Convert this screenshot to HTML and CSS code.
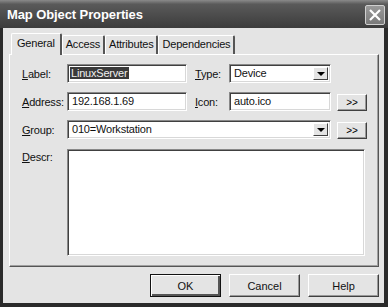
FILE: index.html
```html
<!DOCTYPE html>
<html>

<head>
    <link rel="stylesheet" href="styles.css">
</head>

<body>

    <div class="window">
        <div class="titlebar">
            <span class="title">Map Object Properties</span>
            <div class="close-btn">
                <svg width="14" height="12" viewBox="0 0 14 12">
                    <path d="M2 1 L12 11 M12 1 L2 11" stroke="white" stroke-width="2.2" fill="none" />
                </svg>
            </div>
        </div>

        <div class="client">
            <div class="tabs">
                <div class="tab active">General</div>
                <div class="tab">Access</div>
                <div class="tab">Attributes</div>
                <div class="tab">Dependencies</div>
            </div>

            <div class="panel">
                <div class="form">
                    <label class="lbl"><u>L</u>abel:</label>
                    <div class="field short"><span class="selected">LinuxServer</span></div>
                    <label class="lbl"><u>T</u>ype:</label>
                    <div class="field combo mid">
                        <span>Device</span>
                        <span class="drop-btn"></span>
                    </div>
                    <div></div>

                    <label class="lbl"><u>A</u>ddress:</label>
                    <div class="field short">192.168.1.69</div>
                    <label class="lbl"><u>I</u>con:</label>
                    <div class="field mid">auto.ico</div>
                    <button class="more-btn">&gt;&gt;</button>

                    <label class="lbl"><u>G</u>roup:</label>
                    <div class="field combo wide">
                        <span>010=Workstation</span>
                        <span class="drop-btn"></span>
                    </div>
                    <button class="more-btn">&gt;&gt;</button>

                    <label class="lbl descr-lbl"><u>D</u>escr:</label>
                    <div class="field descr"></div>
                </div>
            </div>

            <div class="buttons">
                <button class="dlg-btn default">OK</button>
                <button class="dlg-btn">Cancel</button>
                <button class="dlg-btn">Help</button>
            </div>
        </div>
    </div>

</body>

</html>
```

FILE: styles.css
```css
body {
    margin: 0;
    font-family: "Liberation Sans", Arial, sans-serif;
    font-size: 11px;
    color: #111;
}

.window {
    width: 388px;
    height: 307px;
    box-sizing: border-box;
    background-color: #2a2a2a;
    padding: 0 4px 4px 3px;
    display: flex;
    flex-direction: column;
}

/* Title bar */
.titlebar {
    height: 28px;
    margin: 0 -4px 0 -3px;
    padding: 0 3px 0 7px;
    background: linear-gradient(#8a8a8a, #5a5a5a 15%, #4a4a4a 60%, #3c3c3c);
    display: flex;
    align-items: center;
    justify-content: space-between;
}

.title {
    color: white;
    font-weight: bold;
    font-size: 13px;
    letter-spacing: -0.1px;
    padding-top: 1px;
}

.close-btn {
    width: 20px;
    height: 20px;
    box-sizing: border-box;
    border: 1px solid #d0d0d0;
    border-radius: 2px;
    background: linear-gradient(#9a9a9a, #7a7a7a);
    display: flex;
    align-items: center;
    justify-content: center;
    margin-top: 2px;
}

.client {
    flex: 1;
    background-color: #e4e4e4;
    display: flex;
    flex-direction: column;
    padding: 5px 5px 0 6px;
}

/* Tabs */
.tabs {
    display: flex;
    height: 21px;
    padding-left: 2px;
    align-items: flex-end;
}

.tab {
    height: 18px;
    line-height: 17px;
    padding: 0 3px;
    border: 1px solid #fff;
    border-bottom: none;
    border-right: 2px solid #555;
    border-radius: 2px 2px 0 0;
    letter-spacing: -0.2px;
}

.tab.active {
    height: 21px;
    line-height: 19px;
    padding: 0 5px;
    background-color: #e4e4e4;
    position: relative;
    top: 1px;
    z-index: 1;
}

.panel {
    height: 213px;
    box-sizing: border-box;
    border: 1px solid;
    border-color: #fff #555 #555 #fff;
    box-shadow: inset -1px -1px #a0a0a0;
    padding: 9px 0 0 12px;
}

/* Form grid */
.form {
    display: grid;
    grid-template-columns: 45px 128px 34px 108px 30px;
    grid-auto-rows: 19px;
    row-gap: 9px;
    align-items: center;
}

.lbl {
    letter-spacing: -0.2px;
}

.field {
    height: 19px;
    box-sizing: border-box;
    background-color: white;
    border: 1px solid;
    border-color: #888 #fff #fff #888;
    box-shadow: inset 1px 1px #404040, inset -1px -1px #d8d8d8;
    padding: 2px 3px 0 4px;
    letter-spacing: -0.2px;
    white-space: nowrap;
}

.short {
    width: 120px;
}

.mid {
    width: 102px;
}

.wide {
    grid-column: 2 / 5;
    width: 264px;
}

.combo {
    display: flex;
    justify-content: space-between;
    padding-right: 2px;
}

.drop-btn {
    width: 15px;
    height: 13px;
    box-sizing: border-box;
    background-color: #e4e4e4;
    border: 1px solid;
    border-color: #fff #404040 #404040 #fff;
    position: relative;
}

.drop-btn::after {
    content: "";
    position: absolute;
    left: 3px;
    top: 4px;
    border-left: 4px solid transparent;
    border-right: 4px solid transparent;
    border-top: 4px solid #000;
}

.selected {
    background-color: #3a3a3a;
    color: #f0f0f0;
    padding: 0 1px;
    margin-left: -2px;
}

.more-btn {
    width: 30px;
    height: 17px;
    margin-top: 2px;
    box-sizing: border-box;
    padding: 0;
    font-family: "Liberation Sans", Arial, sans-serif;
    font-size: 10px;
    background-color: #e4e4e4;
    border: 1px solid;
    border-color: #fff #404040 #404040 #fff;
    box-shadow: inset -1px -1px #999;
}

.descr-lbl {
    align-self: start;
    margin-top: 3px;
}

.descr {
    grid-column: 2 / 6;
    width: 298px;
    height: 107px;
    margin-top: 1px;
    align-self: start;
}

/* Dialog buttons */
.buttons {
    display: flex;
    justify-content: flex-end;
    gap: 8px;
    padding-top: 7px;
}

.dlg-btn {
    width: 71px;
    height: 23px;
    box-sizing: border-box;
    font-family: "Liberation Sans", Arial, sans-serif;
    font-size: 11px;
    color: #111;
    background-color: #e4e4e4;
    border: 1px solid;
    border-color: #fff #404040 #404040 #fff;
    box-shadow: inset -1px -1px #999;
}

.dlg-btn.default {
    border: 1px solid #111;
    box-shadow: inset 1px 1px #fff, inset -2px -2px #555;
}
```
